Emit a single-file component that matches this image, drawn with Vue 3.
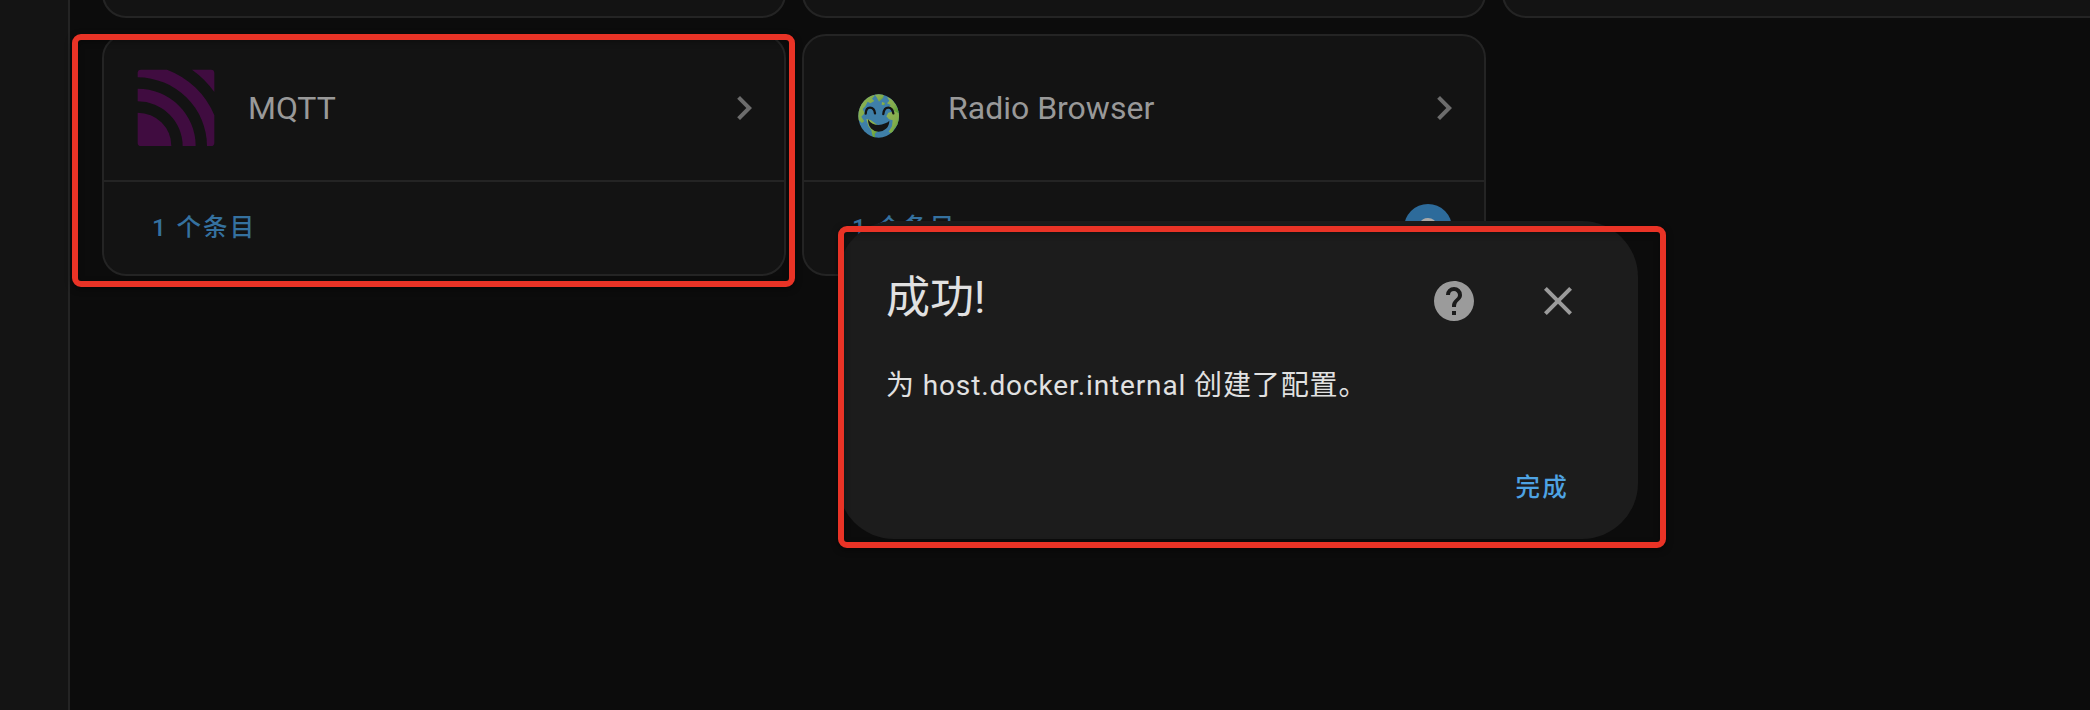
<script setup>
const integrations = [
  { name: 'MQTT', icon: 'mqtt', entries: '1 个条目', cloud: false },
  { name: 'Radio Browser', icon: 'radio', entries: '1 个条目', cloud: true },
]
</script>

<template>
  <div class="screen">
    <aside class="sidebar"></aside>
    <main class="content">
      <div v-for="n in 3" :key="n" class="card previous"></div>
      <section v-for="item in integrations" :key="item.name" class="card">
        <header class="card-head">
          <svg v-if="item.icon === 'mqtt'" class="brand" viewBox="0 0 240 240">
            <g transform="translate(5 5)" fill="#400c40">
              <path d="M0 129A101 99 0 0 1 101 229H10Q0 229 0 219Z" />
              <path d="M0 57A174 172 0 0 1 174 229H135A135 134 0 0 0 0 95Z" />
              <path d="M0 10Q0 0 10 0H88A248 248 0 0 1 230 137V219Q230 229 220 229H208A208 207 0 0 0 0 23Z" />
              <path d="M163 0H220Q230 0 230 10V67A282 282 0 0 0 163 0Z" />
            </g>
          </svg>
          <svg v-else class="brand" viewBox="48 24 240 240">
            <defs>
              <clipPath id="globe"><ellipse cx="176" cy="168" rx="61" ry="65" /></clipPath>
              <linearGradient id="land" x1="0" y1="0" x2="1" y2="1">
                <stop offset="0" stop-color="#91b257" />
                <stop offset="0.55" stop-color="#83ad4c" />
                <stop offset="1" stop-color="#4b9a2b" />
              </linearGradient>
            </defs>
            <ellipse cx="176" cy="168" rx="61" ry="65" fill="#3f7fa8" />
            <g clip-path="url(#globe)" fill="url(#land)">
              <path d="M112 165V130L135 106L157 101L164 107L156 116L163 123L151 130L143 125L136 139L128 147L134 160L124 170L133 184L126 189L112 177Z" />
              <path d="M162 101H193L189 114L177 125L170 112Z" />
              <path d="M201 111L216 118L231 138L238 158L226 159L218 147L205 145L212 135L201 130L208 122Z" />
              <path d="M205 158L224 154L240 161V188L224 205L216 222L206 215L216 199L218 181L207 178L199 169Z" />
              <path d="M139 177L152 180L176 198L174 213L164 222L166 234L158 230L154 211L145 198Z" />
              <path d="M186 126l9 3l-2 7l-8-2z" />
            </g>
            <path d="M137 161Q138 143 150 143Q163 143 165 160M190 162Q192 143 205 143Q217 143 220 160" fill="none" stroke="#141414" stroke-width="7" stroke-linecap="round" />
            <path d="M144 178Q149 187 158 191Q176 199 196 190Q204 187 208 182Q208 197 198 206Q188 215 176 215Q163 215 154 206Q144 196 144 178Z" fill="#141414" />
          </svg>
          <h2>{{ item.name }}</h2>
          <svg class="chevron" viewBox="0 0 24 24">
            <path d="M8.59,16.58L13.17,12L8.59,7.41L10,6L16,12L10,18L8.59,16.58Z" />
          </svg>
        </header>
        <footer class="card-foot">
          <button class="entries">{{ item.entries }}</button>
          <span v-if="item.cloud" class="badge">
            <svg viewBox="0 0 24 24"><path d="M19.35 10.03A7.49 7.49 0 0 0 12 4A7.5 7.5 0 0 0 5.35 8.03A6 6 0 0 0 6 20H19A5 5 0 0 0 19.35 10.03Z" /></svg>
          </span>
        </footer>
      </section>
    </main>

    <div class="dialog" role="dialog">
      <header class="dialog-head">
        <h1>成功!</h1>
        <svg viewBox="0 0 24 24">
          <path d="M15.07,11.25L14.17,12.17C13.45,12.89 13,13.5 13,15H11V14.5C11,13.39 11.45,12.39 12.17,11.67L13.41,10.41C13.78,10.05 14,9.55 14,9C14,7.89 13.1,7 12,7A2,2 0 0,0 10,9H8A4,4 0 0,1 12,5A4,4 0 0,1 16,9C16,9.88 15.64,10.67 15.07,11.25M13,19H11V17H13M12,2A10,10 0 0,0 2,12A10,10 0 0,0 12,22A10,10 0 0,0 22,12C22,6.47 17.5,2 12,2Z" />
        </svg>
        <svg viewBox="0 0 24 24">
          <path d="M19,6.41L17.59,5L12,10.59L6.41,5L5,6.41L10.59,12L5,17.59L6.41,19L12,13.41L17.59,19L19,17.59L13.41,12L19,6.41Z" />
        </svg>
      </header>
      <p class="message">为 host.docker.internal 创建了配置。</p>
      <footer class="actions"><button>完成</button></footer>
    </div>

    <div class="highlight card-mark"></div>
    <div class="highlight dialog-mark"></div>
  </div>
</template>

<style>
body {
  margin: 0;
  background: #0c0c0c;
}
</style>

<style scoped>
.screen {
  position: relative;
  display: flex;
  width: 2090px;
  height: 710px;
  overflow: hidden;
  background: #0c0c0c;
  font-family: Roboto, "Noto Sans CJK SC", sans-serif;
}
.screen * {
  box-sizing: border-box;
}
.sidebar {
  flex: none;
  width: 70px;
  background: #141414;
  border-right: 2px solid #242424;
}
.content {
  flex: none;
  display: grid;
  grid-template-columns: repeat(3, 684px);
  grid-template-rows: 18px 242px;
  gap: 16px;
  padding-left: 32px;
}
.card {
  background: #131313;
  border: 2px solid #242424;
  border-radius: 24px;
}
.previous {
  height: 60px;
  align-self: end;
}
.card-head {
  display: flex;
  align-items: center;
  height: 146px;
  padding: 0 16px 0 32px;
  border-bottom: 2px solid #242424;
}
.brand {
  width: 80px;
  height: 80px;
}
h2 {
  flex: 1;
  margin: 0 0 0 32px;
  font-size: 32px;
  font-weight: 400;
  line-height: 48px;
  color: #999;
}
.chevron {
  width: 48px;
  height: 48px;
  fill: #6c6c6c;
}
.card-foot {
  display: flex;
  align-items: center;
  justify-content: space-between;
  height: 92px;
  padding: 0 32px 0 48px;
}
button {
  padding: 0;
  border: 0;
  background: none;
  font: 500 24.5px/36px Roboto, "Noto Sans CJK SC", sans-serif;
  letter-spacing: 2.2px;
}
.entries {
  color: #35719f;
}
.badge {
  display: grid;
  place-items: center;
  width: 48px;
  height: 48px;
  border-radius: 50%;
  background: #2d6b9b;
}
.badge svg {
  width: 30px;
  height: 30px;
  fill: #a9a9a9;
}
.dialog {
  position: absolute;
  left: 838px;
  top: 221px;
  width: 800px;
  height: 318px;
  border-radius: 56px;
  background: #1c1c1c;
}
.dialog-head {
  display: flex;
  align-items: center;
  gap: 56px;
  height: 104px;
  padding: 56px 56px 0 48px;
}
.dialog-head h1 {
  flex: 1;
  margin: 0 0 6px;
  font-size: 44px;
  font-weight: 400;
  line-height: 48px;
  color: #e1e1e1;
}
.dialog-head svg {
  width: 48px;
  height: 48px;
  fill: #9b9b9b;
}
.message {
  margin: 43px 48px 0;
  font-size: 28px;
  line-height: 36px;
  letter-spacing: 0.875px;
  color: #e1e1e1;
}
.actions {
  display: flex;
  justify-content: flex-end;
  margin-top: 66px;
  padding-right: 69px;
}
.actions button {
  color: #4ea3e3;
}
.highlight {
  position: absolute;
  border: 6px solid #e93326;
  border-radius: 9px;
  box-shadow: 0 2px 6px rgba(0, 0, 0, 0.5), inset 0 2px 6px rgba(0, 0, 0, 0.3);
}
.card-mark {
  left: 72px;
  top: 34px;
  width: 723px;
  height: 253px;
}
.dialog-mark {
  left: 838px;
  top: 226px;
  width: 828px;
  height: 322px;
}
</style>
